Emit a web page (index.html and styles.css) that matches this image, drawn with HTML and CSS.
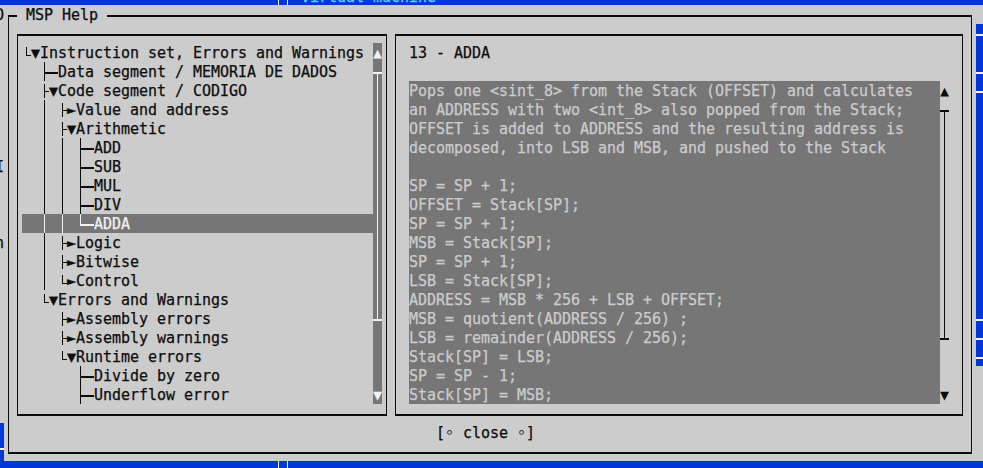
FILE: index.html
```html
<!DOCTYPE html>
<html>
<head>
<meta charset="utf-8">
<title>MSP Help</title>
<link rel="stylesheet" href="styles.css">
</head>
<body>
<div class="screen">
  <div class="bar">
    <span class="bar-gap"></span><span class="cell v"></span><span class="cell v"></span><span class="cell"></span><span class="bar-text">Virtual machine</span>
  </div>
  <div class="middle">
    <div class="strip">
      <div>O</div>
      <div></div><div></div><div></div><div></div><div></div><div></div><div></div>
      <div>I</div>
      <div></div><div></div><div></div>
      <div>n</div>
      <div></div><div></div><div></div><div></div><div></div><div></div><div></div><div></div><div></div>
      <div class="blue"></div>
      <div class="blue low"></div>
    </div>
    <div class="dialog">
      <div class="frame">
        <div class="title">MSP Help</div>
        <div class="panels">
          <div class="panel tree-panel">
            <div class="tree">
              <div class="tr"><span class="cell sl"></span><span class="cell">▼</span><span>Instruction set, Errors and Warnings</span></div>
              <div class="tr"><span class="cell"></span><span class="cell"></span><span class="cell t"></span><span class="cell h"></span><span>Data segment / MEMORIA DE DADOS</span></div>
              <div class="tr"><span class="cell"></span><span class="cell"></span><span class="cell st"></span><span class="cell">▼</span><span>Code segment / CODIGO</span></div>
              <div class="tr"><span class="cell"></span><span class="cell"></span><span class="cell v"></span><span class="cell"></span><span class="cell st"></span><span class="cell">►</span><span>Value and address</span></div>
              <div class="tr"><span class="cell"></span><span class="cell"></span><span class="cell v"></span><span class="cell"></span><span class="cell st"></span><span class="cell">▼</span><span>Arithmetic</span></div>
              <div class="tr"><span class="cell"></span><span class="cell"></span><span class="cell v"></span><span class="cell"></span><span class="cell v"></span><span class="cell"></span><span class="cell t"></span><span class="cell h"></span><span>ADD</span></div>
              <div class="tr"><span class="cell"></span><span class="cell"></span><span class="cell v"></span><span class="cell"></span><span class="cell v"></span><span class="cell"></span><span class="cell t"></span><span class="cell h"></span><span>SUB</span></div>
              <div class="tr"><span class="cell"></span><span class="cell"></span><span class="cell v"></span><span class="cell"></span><span class="cell v"></span><span class="cell"></span><span class="cell t"></span><span class="cell h"></span><span>MUL</span></div>
              <div class="tr"><span class="cell"></span><span class="cell"></span><span class="cell v"></span><span class="cell"></span><span class="cell v"></span><span class="cell"></span><span class="cell t"></span><span class="cell h"></span><span>DIV</span></div>
              <div class="tr sel"><span class="cell"></span><span class="cell"></span><span class="cell v"></span><span class="cell"></span><span class="cell v"></span><span class="cell"></span><span class="cell l"></span><span class="cell h"></span><span>ADDA</span></div>
              <div class="tr"><span class="cell"></span><span class="cell"></span><span class="cell v"></span><span class="cell"></span><span class="cell st"></span><span class="cell">►</span><span>Logic</span></div>
              <div class="tr"><span class="cell"></span><span class="cell"></span><span class="cell v"></span><span class="cell"></span><span class="cell st"></span><span class="cell">►</span><span>Bitwise</span></div>
              <div class="tr"><span class="cell"></span><span class="cell"></span><span class="cell v"></span><span class="cell"></span><span class="cell sl"></span><span class="cell">►</span><span>Control</span></div>
              <div class="tr"><span class="cell"></span><span class="cell"></span><span class="cell sl"></span><span class="cell">▼</span><span>Errors and Warnings</span></div>
              <div class="tr"><span class="cell"></span><span class="cell"></span><span class="cell"></span><span class="cell"></span><span class="cell st"></span><span class="cell">►</span><span>Assembly errors</span></div>
              <div class="tr"><span class="cell"></span><span class="cell"></span><span class="cell"></span><span class="cell"></span><span class="cell st"></span><span class="cell">►</span><span>Assembly warnings</span></div>
              <div class="tr"><span class="cell"></span><span class="cell"></span><span class="cell"></span><span class="cell"></span><span class="cell sl"></span><span class="cell">▼</span><span>Runtime errors</span></div>
              <div class="tr"><span class="cell"></span><span class="cell"></span><span class="cell"></span><span class="cell"></span><span class="cell"></span><span class="cell"></span><span class="cell t"></span><span class="cell h"></span><span>Divide by zero</span></div>
              <div class="tr"><span class="cell"></span><span class="cell"></span><span class="cell"></span><span class="cell"></span><span class="cell"></span><span class="cell"></span><span class="cell t"></span><span class="cell h"></span><span>Underflow error</span></div>
            </div>
            <div class="vscroll dark">
              <span class="cell">▲</span>
              <div class="thumb thumb-tree"></div>
              <div class="grow"></div>
              <span class="cell">▼</span>
            </div>
          </div>
          <div class="panel info-panel">
            <div class="heading">13 - ADDA</div>
            <div class="blank"></div>
            <div class="info-body">
              <span class="cell"></span>
<pre class="desc">Pops one &lt;sint_8&gt; from the Stack (OFFSET) and calculates
an ADDRESS with two &lt;int_8&gt; also popped from the Stack;
OFFSET is added to ADDRESS and the resulting address is
decomposed, into LSB and MSB, and pushed to the Stack

SP = SP + 1;
OFFSET = Stack[SP];
SP = SP + 1;
MSB = Stack[SP];
SP = SP + 1;
LSB = Stack[SP];
ADDRESS = MSB * 256 + LSB + OFFSET;
MSB = quotient(ADDRESS / 256) ;
LSB = remainder(ADDRESS / 256);
Stack[SP] = LSB;
SP = SP - 1;
Stack[SP] = MSB;</pre>
              <div class="vscroll">
                <span class="cell">▲</span>
                <div class="thumb thumb-info"></div>
                <div class="grow"></div>
                <span class="cell">▼</span>
              </div>
              <span class="cell"></span>
            </div>
          </div>
        </div>
        <div class="buttons"><span>[</span><span class="cell">◦</span><span> close </span><span class="cell">◦</span><span>]</span></div>
      </div>
    </div>
    <div class="strip">
      <div></div>
      <div class="blue hl"></div>
      <div class="blue"></div>
      <div class="blue hl"></div>
      <div class="blue hl"></div>
      <div class="blue"></div><div class="blue"></div><div class="blue"></div><div class="blue"></div><div class="blue"></div><div class="blue"></div><div class="blue"></div><div class="blue"></div><div class="blue"></div><div class="blue"></div><div class="blue"></div>
      <div class="blue hl"></div>
      <div class="blue hl"></div>
      <div class="blue hl"></div>
      <div></div><div></div><div></div><div></div><div></div>
    </div>
  </div>
  <div class="bar">
    <span class="bar-gap"></span><span class="cell v"></span><span class="cell v"></span>
  </div>
</div>
</body>
</html>
```

FILE: styles.css
```css
* { box-sizing: border-box; }

html, body {
  margin: 0;
  padding: 0;
}

body {
  width: 983px;
  height: 468px;
  overflow: hidden;
  background: #cccccc;
  color: #0c0c0c;
  font-family: "DejaVu Sans Mono", monospace;
  font-size: 15px;
  line-height: 21px;
  letter-spacing: -0.03px;
  -webkit-text-stroke: 0.25px currentColor;
  --ln: #0c0c0c;
}

.screen {
  margin: -14px 0 0 -5px;
  width: 990px;
}

/* character cell */
.cell {
  flex: none;
  display: inline-block;
  width: 9px;
  height: 19px;
  text-align: center;
  letter-spacing: 0;
}

/* box drawing pieces */
.v {
  background: linear-gradient(var(--ln), var(--ln)) 4px 0 / 1px 19px no-repeat;
}
.t {
  background:
    linear-gradient(var(--ln), var(--ln)) 4px 0 / 1px 19px no-repeat,
    linear-gradient(var(--ln), var(--ln)) 4px 10px / 5px 2px no-repeat;
}
.l {
  background:
    linear-gradient(var(--ln), var(--ln)) 4px 0 / 1px 12px no-repeat,
    linear-gradient(var(--ln), var(--ln)) 4px 10px / 5px 2px no-repeat;
}
.h {
  background: linear-gradient(var(--ln), var(--ln)) 0 10px / 9px 2px no-repeat;
}
.st {
  background:
    linear-gradient(var(--ln), var(--ln)) 4px 3px / 1px 14px no-repeat,
    linear-gradient(var(--ln), var(--ln)) 4px 10px / 5px 1px no-repeat;
}
.sl {
  background:
    linear-gradient(var(--ln), var(--ln)) 4px 4px / 1px 9px no-repeat,
    linear-gradient(var(--ln), var(--ln)) 4px 12px / 5px 1px no-repeat;
}

/* background terminal bars */
.bar {
  display: flex;
  height: 19px;
  background: #0037da;
  --ln: #f2f2f2;
}
.bar-gap {
  flex: none;
  width: 279px;
}
.bar-text {
  color: #61d6d6;
  white-space: pre;
  padding-top: 1px;
}

.middle {
  display: flex;
  height: 456px;
}

.strip {
  flex: none;
  width: 9px;
  display: flex;
  flex-direction: column;
  overflow: hidden;
}
.strip > div {
  flex: none;
  height: 19px;
  white-space: pre;
}
.strip .blue { background: #0037da; }
.strip .hl {
  background: linear-gradient(#f2f2f2, #f2f2f2) 0 10px / 9px 2px no-repeat, #0037da;
}
.strip .low {
  background: linear-gradient(#f2f2f2, #f2f2f2) 0 6px / 9px 2px no-repeat, #0037da;
}

/* dialog */
.dialog {
  flex: none;
  width: 972px;
  background: #cccccc;
  display: flex;
  flex-direction: column;
}
.frame {
  flex: 1;
  margin: 10px 4px 7px;
  border: solid #0c0c0c;
  border-width: 2px 1px;
  padding: 0 4px 10px;
  display: flex;
  flex-direction: column;
}
.title {
  align-self: flex-start;
  height: 19px;
  margin: -12px 0 0 4px;
  padding: 0 9px;
  background: #cccccc;
  white-space: pre;
}

.panels {
  display: flex;
  height: 399px;
}
.panel {
  margin: 10px 4px 7px;
  border: solid #0c0c0c;
  border-width: 2px 1px;
  padding: 7px 4px 10px;
}
.tree-panel {
  width: 370px;
  display: flex;
}
.info-panel {
  width: 568px;
  display: flex;
  flex-direction: column;
}

/* tree */
.tree {
  width: 351px;
  display: flex;
  flex-direction: column;
}
.tr {
  flex: none;
  display: flex;
  height: 19px;
  white-space: pre;
}
.tr.sel {
  background: #767676;
  color: #f2f2f2;
  --ln: #f2f2f2;
}

/* scrollbars */
.vscroll {
  flex: none;
  width: 9px;
  display: flex;
  flex-direction: column;
  -webkit-text-stroke: 0;
}
.vscroll.dark {
  background: #767676;
  color: #f2f2f2;
  --ln: #f2f2f2;
}
.grow { flex: 1; }
.thumb {
  flex: none;
  background:
    linear-gradient(var(--ln), var(--ln)) 0 10px / 9px 2px no-repeat,
    linear-gradient(var(--ln), var(--ln)) left 0 bottom 7px / 9px 2px no-repeat,
    linear-gradient(var(--ln), var(--ln)) 4px 10px / 1px calc(100% - 19px) no-repeat;
}
.thumb-tree { height: 266px; }
.thumb-info { height: 247px; }

/* info */
.heading {
  flex: none;
  height: 19px;
  padding-left: 9px;
  white-space: pre;
}
.blank { flex: none; height: 19px; }
.info-body {
  flex: none;
  display: flex;
  height: 323px;
}
.desc {
  flex: none;
  width: 531px;
  height: 323px;
  margin: 0;
  padding-top: 1px;
  font: inherit;
  line-height: 19px;
  background: #767676;
  color: #cccccc;
  white-space: pre;
  overflow: hidden;
}

.buttons {
  flex: none;
  display: flex;
  height: 19px;
  padding-left: 423px;
  white-space: pre;
}
```
